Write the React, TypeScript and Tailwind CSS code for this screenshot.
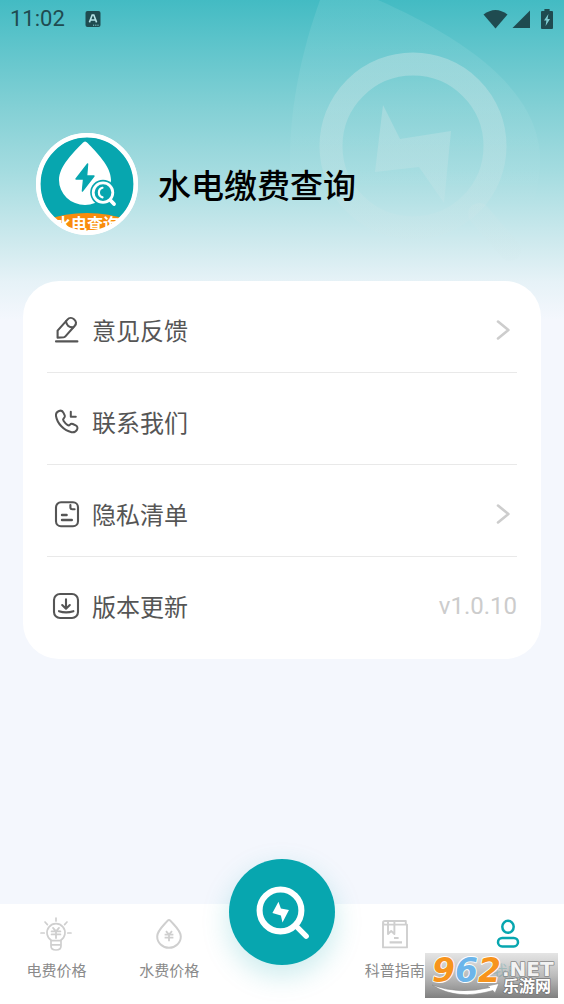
import type { ReactNode } from 'react'

const TEAL = '#07a6af'

interface MenuItem {
  label: string
  icon: ReactNode
  arrow?: boolean
  value?: string
}

const MENU: MenuItem[] = [
  { label: '意见反馈', icon: <PencilIcon />, arrow: true },
  { label: '联系我们', icon: <PhoneIcon /> },
  { label: '隐私清单', icon: <DocIcon />, arrow: true },
  { label: '版本更新', icon: <DownloadIcon />, value: 'v1.0.10' },
]

function PencilIcon() {
  return (
    <svg className="w-7 h-7" viewBox="0 0 28 28" fill="none" stroke="currentColor" strokeWidth="2.1" strokeLinecap="round" strokeLinejoin="round">
      <path d="M5.6 21.6 L5.6 14.6 L15.4 3.6 C17.2 1.6 20 1.4 22 3.2 C24.4 5.2 24.6 7.8 22.8 9.8 L13.4 20.4 Q12.8 21.1 11.8 21.2 Z" />
      <path d="M14 5.4 C14.4 9.2 17.2 11.6 21.2 11.4" />
      <path d="M4 25.4 H25.4" />
    </svg>
  )
}

function PhoneIcon() {
  return (
    <svg className="w-7 h-7" viewBox="0 0 28 28" fill="none" stroke="currentColor" strokeWidth="2" strokeLinecap="round" strokeLinejoin="round">
      <path d="M7 3 C9 2.2 10.7 3 11.5 4.8 L12.8 7.7 C13.3 9 12.6 9.8 11.6 10.6 C10.9 11.2 11 12 11.5 12.8 C12.6 14.6 13.9 16 15.7 17.1 C16.6 17.6 17.2 17.5 17.8 16.8 C18.6 15.8 19.6 15.4 20.8 16 L23.7 17.4 C25.5 18.3 25.9 20 25 21.7 C23.9 23.7 22 24.6 19.6 24.2 C11.9 22.7 5.2 15.4 4 8 C3.7 5.6 4.8 3.9 7 3 Z" />
      <path d="M18.8 3.8 V8.8 H23.8" />
    </svg>
  )
}

function DocIcon() {
  return (
    <svg className="w-7 h-7" viewBox="0 0 28 28" fill="none" stroke="currentColor" strokeWidth="2.1" strokeLinecap="round" strokeLinejoin="round">
      <rect x="4" y="2.2" width="22" height="24" rx="5" />
      <path d="M18.4 5 V7.4 Q18.4 9.2 20.2 9.2 H22.6" />
      <path d="M10 15 H14.6 M10 20 H19.8" strokeWidth="2.4" />
    </svg>
  )
}

function DownloadIcon() {
  return (
    <svg className="w-7 h-7" viewBox="0 0 28 28" fill="none" stroke="currentColor" strokeWidth="2.1" strokeLinecap="round" strokeLinejoin="round">
      <rect x="2" y="2" width="24" height="24" rx="6" />
      <path d="M14 7.4 V16.4 M10.2 13 L14 16.7 L17.8 13" />
      <path d="M7 19.2 Q14 21.6 21.4 19.2" />
    </svg>
  )
}

function YuanMark({ x, y }: { x: number; y: number }) {
  return (
    <path d={`M${x - 3} ${y - 4.5} L${x} ${y - 1} L${x + 3} ${y - 4.5} M${x - 4.4} ${y - 1} H${x + 4.4} M${x - 4.4} ${y + 2} H${x + 4.4} M${x} ${y - 1} V${y + 5.6}`} strokeWidth="1.8" />
  )
}

function BulbIcon() {
  return (
    <svg className="w-8 h-[34px]" viewBox="0 0 32 34" fill="none" stroke="currentColor" strokeWidth="1.7" strokeLinecap="round">
      <path d="M11.4 23.4 A9 9 0 1 1 20.6 23.4" />
      <path d="M11 23.6 H21 V29 Q21 33 16 33 Q11 33 11 29 Z M11 27.8 H21" />
      <path d="M16 1 V4 M1 16 H4.2 M27.8 16 H31 M5 5 L7.4 7.6 M27 5 L24.6 7.6" />
      <YuanMark x={16} y={15.4} />
    </svg>
  )
}

function DropIcon() {
  return (
    <svg className="w-8 h-[34px]" viewBox="0 0 32 34" fill="none" stroke="currentColor" strokeWidth="2" strokeLinejoin="round">
      <path d="M14.7 3.6 Q16 2.2 17.3 3.6 C21.4 8.4 27.8 13.6 27.8 19.4 A11.8 11.4 0 0 1 4.2 19.4 C4.2 13.6 10.6 8.4 14.7 3.6 Z" />
      <YuanMark x={16} y={18.6} />
    </svg>
  )
}

function BookIcon() {
  return (
    <svg className="w-8 h-[34px]" viewBox="0 0 32 34" fill="none" stroke="currentColor" strokeWidth="1.9" strokeLinejoin="round">
      <path d="M28 7.6 H6 Q4 7.6 4 5.8 Q4 4 6 4 H26.8 V7.6 H28 V30.4 H4 V5.8" />
      <path d="M9 4 V17 L12.2 14 L15.4 17 V4" />
      <path d="M15 21 H19.6 M10.6 25.4 H23" strokeWidth="2.2" />
    </svg>
  )
}

function UserIcon() {
  return (
    <svg className="w-8 h-[34px]" viewBox="0 0 32 34" fill="none" stroke="currentColor" strokeWidth="2.5">
      <ellipse cx="16" cy="9.8" rx="5.7" ry="6" />
      <rect x="6" y="21" width="20" height="8.4" rx="4.2" />
    </svg>
  )
}

function Avatar() {
  return (
    <svg className="w-[102px] h-[102px] shrink-0" viewBox="0 0 102 102">
      <clipPath id="avatar-clip">
        <circle cx="51" cy="51" r="48" />
      </clipPath>
      <circle cx="51" cy="51" r="51" fill="#fff" />
      <circle cx="51" cy="51" r="47" fill={TEAL} />
      <g clipPath="url(#avatar-clip)">
        <ellipse cx="51" cy="104" rx="56" ry="24" fill="#f98c0c" />
        <text x="51" y="97" textAnchor="middle" fontSize="16" fontWeight="700" fill="#fff" fontFamily="'Noto Sans CJK SC', sans-serif">水电查询</text>
      </g>
      <circle cx="51" cy="51" r="48.7" fill="none" stroke="#fff" strokeWidth="4.6" />
      <path d="M46.6 10 Q49 7 51.6 10 C60 19 75 33 75 47 A26 25 0 0 1 23 47 C23 33 38 19 46.6 10 Z" fill="#fff" />
      <path d="M51.6 31 L40 46 H47.6 L46.4 58 L58 43 H50.6 Z" fill={TEAL} stroke={TEAL} strokeWidth="1.4" strokeLinejoin="round" />
      <circle cx="67" cy="59.6" r="12.8" fill={TEAL} />
      <circle cx="67" cy="59.6" r="9.8" fill="none" stroke="#fff" strokeWidth="2.8" />
      <path d="M66.5 54.8 A5 5 0 0 0 66.5 64.4" fill="none" stroke="#fff" strokeWidth="2.2" strokeLinecap="round" />
      <path d="M74.4 67.2 L78 71" stroke="#fff" strokeWidth="3.8" strokeLinecap="round" />
    </svg>
  )
}

function HeaderArt() {
  return (
    <svg className="absolute right-0 top-0 w-[284px] h-[281px]" viewBox="280 0 284 281" fill="none">
      <defs>
        <linearGradient id="fade" x1="0" y1="0" x2="0" y2="281" gradientUnits="userSpaceOnUse">
          <stop offset="0" stopColor="#fff" stopOpacity=".09" />
          <stop offset=".35" stopColor="#fff" stopOpacity=".07" />
          <stop offset=".75" stopColor="#fff" stopOpacity="0" />
        </linearGradient>
        <linearGradient id="ring" x1="0" y1="50" x2="0" y2="260" gradientUnits="userSpaceOnUse">
          <stop offset="0" stopColor="#d5e8e9" stopOpacity=".4" />
          <stop offset=".5" stopColor="#d0e6e8" stopOpacity=".3" />
          <stop offset="1" stopColor="#cfe6e8" stopOpacity=".1" />
        </linearGradient>
      </defs>
      <path d="M320 0 H378 C455 34 540 86 540 160 C540 240 480 281 413 281 C340 281 290 232 290 160 C290 105 302 50 320 0 Z" fill="url(#fade)" />
      <circle cx="413" cy="146" r="82" stroke="url(#ring)" strokeWidth="23" />
      <path d="M383 105 L400 139 L451 131 L444 203 L419 167 L375 172 Z" fill="url(#ring)" />
      <path d="M479 214 L510 250" stroke="url(#ring)" strokeWidth="22" strokeLinecap="round" />
    </svg>
  )
}

function StatusBar() {
  return (
    <div className="relative flex h-[38px] items-center justify-between pl-[10px] pr-[11px] text-[#1f4b50]">
      <div className="flex items-center gap-5">
        <span className="font-['Roboto',sans-serif] text-[22px] leading-6">11:02</span>
        <svg className="w-4 h-4" viewBox="0 0 16 16">
          <rect x=".5" width="15" height="16" rx="2" fill="currentColor" />
          <path d="M4.4 11.4 L7.2 4 H8.8 L11.6 11.4 M5.6 9 H10.4" stroke="#b7e3e6" strokeWidth="1.6" fill="none" />
          <path d="M8 14.2 H14" stroke="#8fd2d6" strokeDasharray="1.2 1" />
        </svg>
      </div>
      <div className="flex items-center">
        <svg className="w-[25px] h-5" viewBox="0 0 25 20" fill="currentColor">
          <path d="M.5 5.4 Q12.5 -3.6 24.5 5.4 L12.5 19.6 Z" />
        </svg>
        <svg className="ml-1 w-[18px] h-5" viewBox="0 0 18 20" fill="currentColor">
          <path d="M18 1.5 V19 H.5 Z" />
        </svg>
        <svg className="ml-[11px] w-3 h-5" viewBox="0 0 12 20">
          <path d="M3.4 0 H8.6 V2 H11 Q12 2 12 3 V19 Q12 20 11 20 H1 Q0 20 0 19 V3 Q0 2 1 2 H3.4 Z" fill="currentColor" />
          <path d="M7.4 5 L3 11.6 H5.4 L4.6 17 L9 10 H6.6 Z" fill="#7fccd1" />
        </svg>
      </div>
    </div>
  )
}

function Tab({ label, icon, active }: { label: string; icon: ReactNode; active?: boolean }) {
  return (
    <button type="button" className={`flex flex-1 flex-col items-center pt-[13px] ${active ? 'text-[#07a6af]' : 'text-[#cfcfcf]'}`}>
      {icon}
      <span className={`mt-[7px] text-[15px] leading-6 ${active ? 'text-[#07a6af]' : 'text-[#8a8a8a]'}`}>{label}</span>
    </button>
  )
}

function SiteBadge() {
  return (
    <svg className="absolute bottom-[6px] right-[6px] w-[133px] h-[45px] overflow-visible" viewBox="0 0 133 45">
      <defs>
        <linearGradient id="badge" x1="0" y1="0" x2="0" y2="1">
          <stop offset="0" stopColor="#dedede" stopOpacity=".8" />
          <stop offset=".5" stopColor="#b0b0b0" stopOpacity=".85" />
          <stop offset="1" stopColor="#7f7f7f" />
        </linearGradient>
      </defs>
      <rect width="133" height="45" fill="url(#badge)" />
      <text x="7" y="29" fontSize="33" fontWeight="700" fontStyle="italic" stroke="#fff" strokeWidth="1.8" strokeLinejoin="round" paintOrder="stroke" fontFamily="'DejaVu Sans', sans-serif">
        <tspan fill="#f7941d">9</tspan><tspan fill="#6cb5ea">6</tspan><tspan fill="#f7941d">2</tspan>
      </text>
      <text x="77" y="23" fontSize="20" fontWeight="700" fill="#f2f2f2" stroke="#8a8a8a" strokeWidth="1.6" strokeLinejoin="round" paintOrder="stroke" fontFamily="'DejaVu Sans', sans-serif">.NET</text>
      <text x="78" y="39" fontSize="16" fontWeight="700" fill="#fff" stroke="#777" strokeWidth="1.6" strokeLinejoin="round" paintOrder="stroke" fontFamily="'Noto Sans CJK SC', sans-serif">乐游网</text>
      <path d="M7 32 Q34 42 65 34.5 L62 33 L74 30.5 L70 40 L68 37.5 Q32 48 7 32 Z" fill="#fff" stroke="#8a8a8a" strokeWidth=".6" />
    </svg>
  )
}

export default function App() {
  return (
    <div className="relative flex min-h-screen flex-col bg-[#f4f7fd] font-['Noto_Sans_CJK_SC',sans-serif]">
      <div className="absolute inset-x-0 top-0 h-[320px] overflow-hidden bg-[linear-gradient(180deg,#43bbc3_0%,#5ac3ca_12%,#80cfd4_32%,#a5dce0_54%,#cfeaee_76%,#e6f2f7_88%,#f4f7fd_100%)]">
        <HeaderArt />
      </div>

      <StatusBar />

      <header className="relative mt-[95px] flex items-center gap-5 px-9">
        <Avatar />
        <h1 className="text-[33px] font-medium leading-10 text-black">水电缴费查询</h1>
      </header>

      {/* Menu */}
      <main className="relative mt-[46px] flex-1 px-[23px]">
        <ul className="rounded-[36px] bg-white px-6 pb-[11px]">
          {MENU.map((item) => (
            <li key={item.label} className="border-b border-[#e9e9e9] last:border-b-0">
              <button type="button" className="flex h-[91px] w-full items-center pl-[5px] pt-[6px] text-[#555]">
                {item.icon}
                <span className="ml-3 text-2xl leading-8">{item.label}</span>
                {item.arrow && (
                  <svg className="ml-auto mr-[7px] w-[14px] h-5" viewBox="0 0 14 20" fill="none" stroke="#cdcdcd" strokeWidth="2.6" strokeLinecap="round" strokeLinejoin="round">
                    <path d="M2 1.6 L12.4 10 L2 18.4" />
                  </svg>
                )}
                {item.value && <span className="ml-auto font-['Roboto',sans-serif] text-2xl leading-8 text-[#ccc]">{item.value}</span>}
              </button>
            </li>
          ))}
        </ul>
      </main>

      {/* Bottom tabs */}
      <nav className="relative flex h-[100px] bg-white">
        <Tab label="电费价格" icon={<BulbIcon />} />
        <Tab label="水费价格" icon={<DropIcon />} />
        <div className="flex flex-1 justify-center">
          <button type="button" aria-label="查询" className="-mt-[45px] h-[106px] w-[106px] shrink-0 rounded-full bg-[#07a6af] shadow-[0_10px_28px_rgba(7,166,175,0.22)]">
            <svg className="w-full h-full" viewBox="0 0 105 105" fill="none" stroke="#fff">
              <circle cx="51" cy="51" r="20.7" strokeWidth="6" />
              <path d="M66 66 L76.4 76.4" strokeWidth="5.4" strokeLinecap="round" />
              <path d="M49 42.4 L51.4 49 L59.4 50.6 L53 63 L51.4 56 L43 53.6 Z" fill="#fff" stroke="none" />
            </svg>
          </button>
        </div>
        <Tab label="科普指南" icon={<BookIcon />} />
        <Tab label="我的" icon={<UserIcon />} active />
        <SiteBadge />
      </nav>
    </div>
  )
}
